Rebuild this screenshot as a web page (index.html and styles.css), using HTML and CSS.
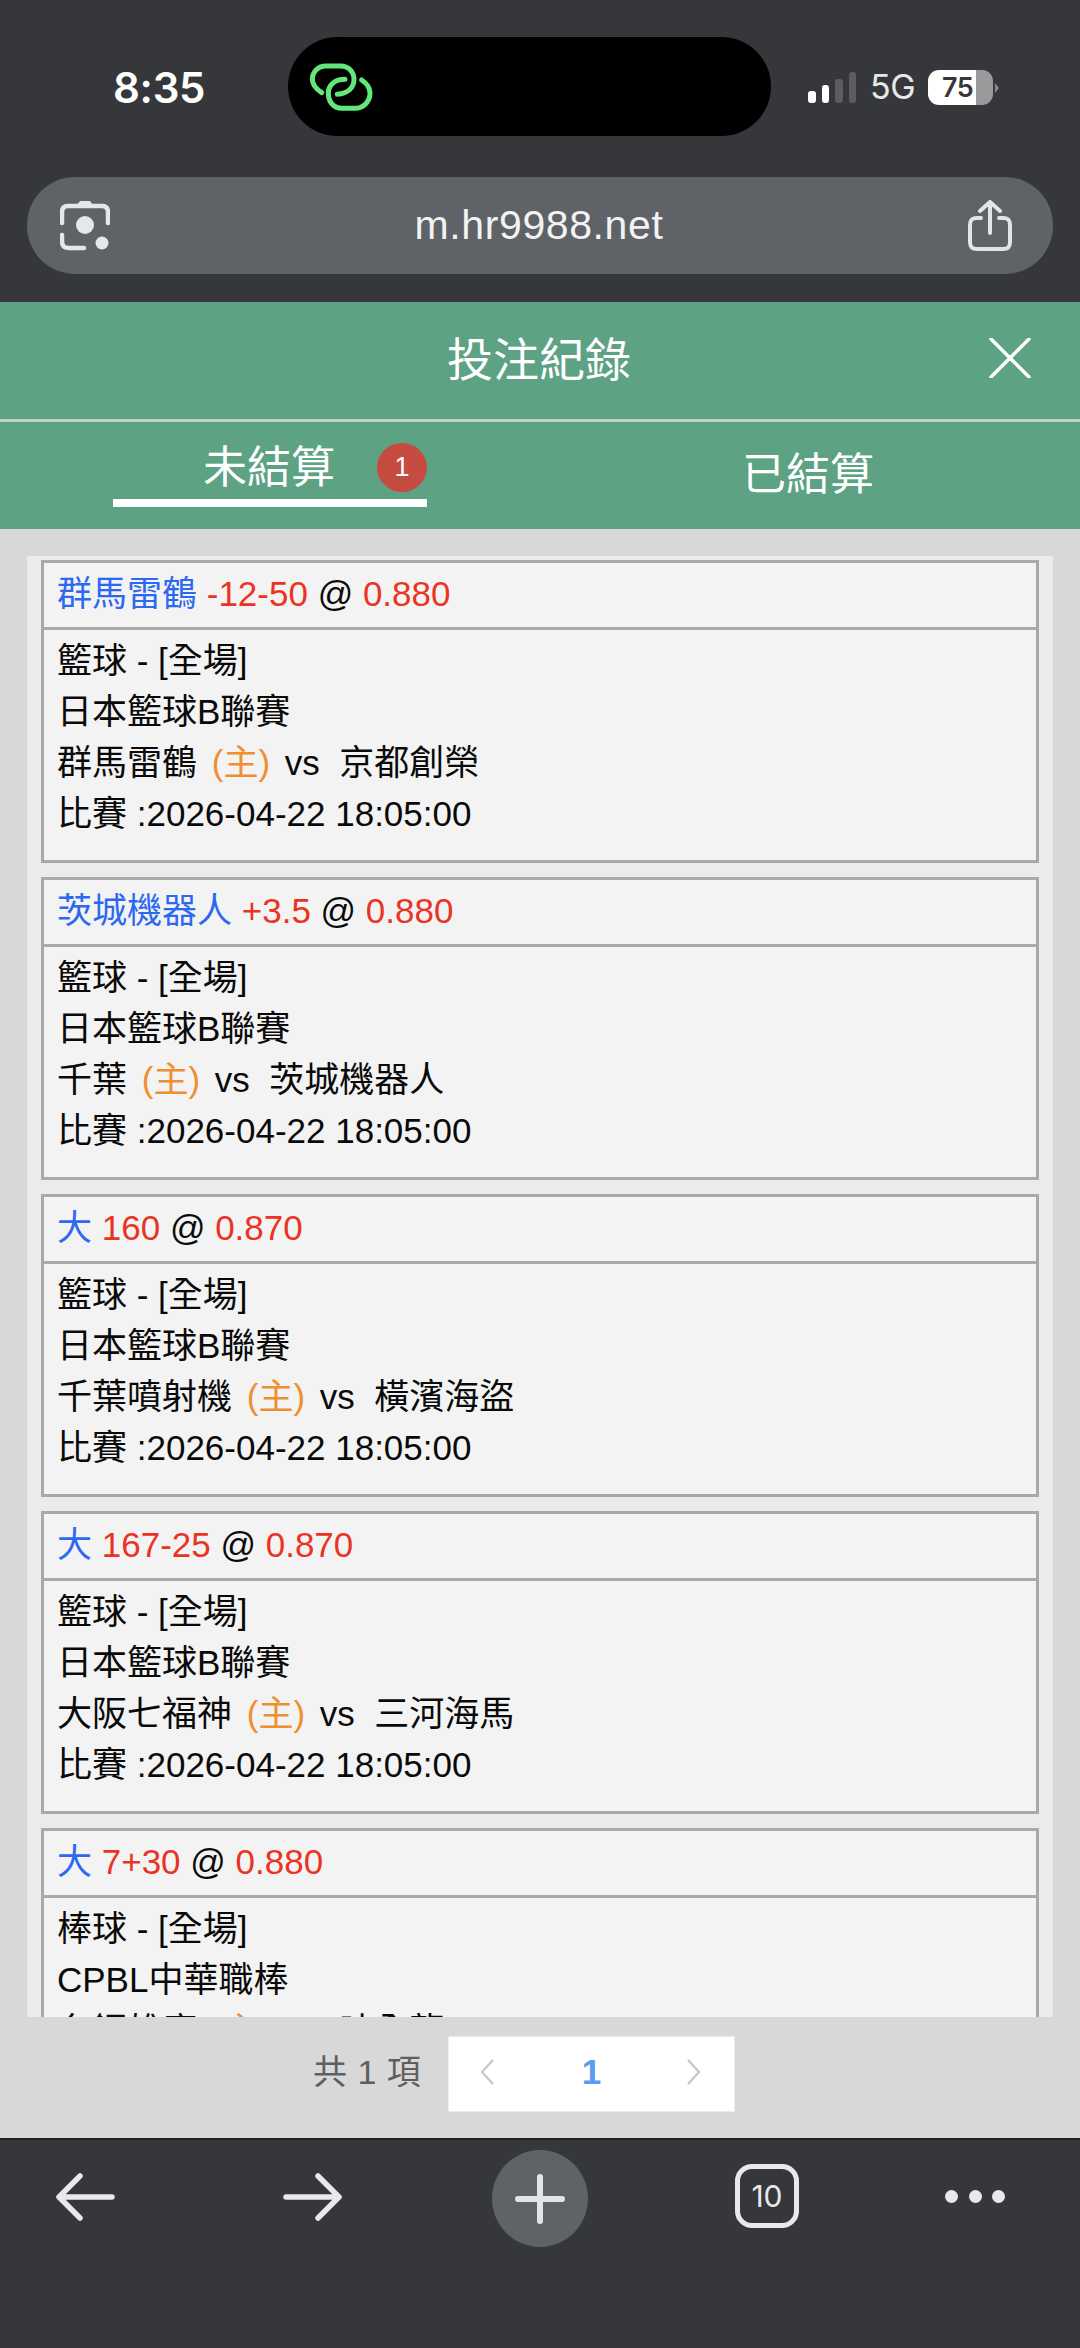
FILE: index.html
```html
<!DOCTYPE html>
<html lang="zh-Hant">
<head>
<meta charset="utf-8">
<title>投注紀錄</title>
<link rel="stylesheet" href="styles.css">
</head>
<body>
<div class="screen">
  <header class="chrome-top">
    <div class="status">
      <span class="time">8:35</span>
      <div class="island">
        <svg class="link-icon" width="80" height="70" viewBox="0 0 240 210" fill="none" stroke="#62e878" stroke-width="15" stroke-linecap="round">
          <path d="M65 128C45 115 37 100 37 88C37 65 55 48 78 48H122C145 48 162 65 162 88C162 112 145 130 112 133"/>
          <path d="M185 90C200 100 210 115 210 130C210 155 190 175 165 175H125C100 175 85 155 85 130C85 105 105 88 135 88"/>
        </svg>
      </div>
      <div class="signal">
        <i class="bar b1"></i><i class="bar b2"></i><i class="bar b3"></i><i class="bar b4"></i>
      </div>
      <span class="net">5G</span>
      <div class="battery"><span class="level">75</span></div>
      <i class="nub"></i>
    </div>
    <div class="urlbar">
      <svg width="50" height="50" viewBox="0 0 50 50" fill="none" stroke="#e6e7ea" stroke-width="4.5" stroke-linecap="round">
        <path d="M2 22V11C2 7 4 5 8 5H42C46 5 48 7 48 11V22"/>
        <path d="M17 4L20 0H30L33 4Z" fill="#e6e7ea" stroke="none"/>
        <path d="M2 34V40C2 45 4 47 9 47H24"/>
        <circle cx="25" cy="24" r="9" fill="#e6e7ea" stroke="none"/>
        <circle cx="42" cy="42" r="6.5" fill="#e6e7ea" stroke="none"/>
      </svg>
      <span class="url">m.hr9988.net</span>
      <svg width="44" height="52" viewBox="0 0 44 52" fill="none" stroke="#e3e4e7" stroke-width="4" stroke-linecap="round" stroke-linejoin="round">
        <path d="M13 18H9C4 18 2 20 2 25V42C2 47 4 49 9 49H35C40 49 42 47 42 42V25C42 20 40 18 35 18H31"/>
        <path d="M22 33V2M12 11L22 2L32 11"/>
      </svg>
    </div>
  </header>

  <section class="title-bar">
    <h1 class="title">投注紀錄</h1>
    <svg class="close" width="42" height="40" viewBox="0 0 42 40" stroke="#fff" stroke-width="3.5" stroke-linecap="round">
      <path d="M2 1L40 39M40 1L2 39"/>
    </svg>
  </section>

  <nav class="tabs">
    <div class="tab active">
      <span class="tab-label">未結算</span>
      <span class="badge">1</span>
    </div>
    <div class="tab other"><span class="tab-label">已結算</span></div>
  </nav>

  <main class="content">
    <div class="list">
      <article class="card">
        <div class="card-head"><span class="blue">群馬雷鶴</span> <span class="red">-12-50</span> @ <span class="red">0.880</span></div>
        <div class="card-body">
          <p>籃球 - [全場]</p>
          <p>日本籃球B聯賽</p>
          <p>群馬雷鶴 <span class="orange">(主)</span> vs&nbsp; 京都創榮</p>
          <p>比賽 :2026-04-22 18:05:00</p>
        </div>
      </article>
      <article class="card">
        <div class="card-head"><span class="blue">茨城機器人</span> <span class="red">+3.5</span> @ <span class="red">0.880</span></div>
        <div class="card-body">
          <p>籃球 - [全場]</p>
          <p>日本籃球B聯賽</p>
          <p>千葉 <span class="orange">(主)</span> vs&nbsp; 茨城機器人</p>
          <p>比賽 :2026-04-22 18:05:00</p>
        </div>
      </article>
      <article class="card">
        <div class="card-head"><span class="blue">大</span> <span class="red">160</span> @ <span class="red">0.870</span></div>
        <div class="card-body">
          <p>籃球 - [全場]</p>
          <p>日本籃球B聯賽</p>
          <p>千葉噴射機 <span class="orange">(主)</span> vs&nbsp; 橫濱海盜</p>
          <p>比賽 :2026-04-22 18:05:00</p>
        </div>
      </article>
      <article class="card">
        <div class="card-head"><span class="blue">大</span> <span class="red">167-25</span> @ <span class="red">0.870</span></div>
        <div class="card-body">
          <p>籃球 - [全場]</p>
          <p>日本籃球B聯賽</p>
          <p>大阪七福神 <span class="orange">(主)</span> vs&nbsp; 三河海馬</p>
          <p>比賽 :2026-04-22 18:05:00</p>
        </div>
      </article>
      <article class="card">
        <div class="card-head"><span class="blue">大</span> <span class="red">7+30</span> @ <span class="red">0.880</span></div>
        <div class="card-body">
          <p>棒球 - [全場]</p>
          <p>CPBL中華職棒</p>
          <p>台鋼雄鷹 <span class="orange">(主)</span> vs&nbsp; 味全龍</p>
          <p>比賽 :2026-04-22 18:05:00</p>
        </div>
      </article>
    </div>
  </main>

  <div class="pager">
    <span class="total">共 1 項</span>
    <div class="pages">
      <svg width="16" height="26" viewBox="0 0 16 26" fill="none" stroke="#c3c5cb" stroke-width="2.2"><path d="M14 1L3 13L14 25"/></svg>
      <span class="current">1</span>
      <svg width="16" height="26" viewBox="0 0 16 26" fill="none" stroke="#c3c5cb" stroke-width="2.2"><path d="M2 1L13 13L2 25"/></svg>
    </div>
  </div>

  <footer class="chrome-bottom">
    <svg class="nav-back" width="60" height="48" viewBox="0 0 60 48" fill="none" stroke="#e8e9ec" stroke-width="5.5" stroke-linecap="round" stroke-linejoin="round"><path d="M57 24H4M25 3L4 24L25 45"/></svg>
    <svg class="nav-forward" width="60" height="48" viewBox="0 0 60 48" fill="none" stroke="#e8e9ec" stroke-width="5.5" stroke-linecap="round" stroke-linejoin="round"><path d="M3 24H56M35 3L56 24L35 45"/></svg>
    <div class="plus">
      <svg width="50" height="50" viewBox="0 0 50 50" stroke="#e3e4e7" stroke-width="6" stroke-linecap="round"><path d="M25 3V47M3 25H47"/></svg>
    </div>
    <div class="tabs-count">10</div>
    <div class="dots"><i></i><i></i><i></i></div>
  </footer>
</div>
</body>
</html>
```
FILE: styles.css
```css
* { box-sizing: border-box; }
html, body { margin: 0; padding: 0; }
body { background: #d8d8d8; font-family: "Liberation Sans", "Noto Sans CJK TC", sans-serif; }
.screen { width: 1080px; height: 2348px; display: flex; flex-direction: column; overflow: hidden; }

.chrome-top { height: 302px; flex: none; background: #36373a; padding-top: 37px; }
.status { height: 99px; display: flex; align-items: center; padding-left: 114px; color: #fff; }
.time { width: 174px; font-size: 42px; font-weight: 600; font-family: "Inter", "Liberation Sans", sans-serif; letter-spacing: -0.3px; margin-top: 2px; margin-left: -1px; margin-right: 1px; }
.island { width: 483px; height: 99px; background: #000; border-radius: 50px; display: flex; align-items: center; padding-left: 12px; }
.link-icon { margin-top: -3px; }
.signal { margin-left: 37px; display: flex; align-items: flex-end; gap: 6px; height: 31px; margin-top: 1px; }
.bar { width: 7.5px; border-radius: 3px; display: block; }
.b1 { height: 12px; background: #fff; }
.b2 { height: 18px; background: #fff; }
.b3 { height: 24px; background: #5c5d60; }
.b4 { height: 31px; background: #5c5d60; }
.net { margin-left: 14px; width: 45px; font-size: 34px; color: #e8e8e8; font-family: "Inter", "Liberation Sans", sans-serif; letter-spacing: -0.5px; }
.battery { margin-left: 13px; width: 65px; height: 35px; margin-top: 2px; border-radius: 11px; background: linear-gradient(90deg, #fff 0 48px, #9a9a9c 48px); color: #36373a; font-size: 27px; font-weight: 600; display: flex; align-items: center; padding-left: 14px; font-family: "Inter", "Liberation Sans", sans-serif; }
.level { letter-spacing: -0.5px; }
.nub { width: 0; height: 0; margin-left: 2px; margin-top: 2px; border-left: 4px solid #8a8a8c; border-top: 5px solid transparent; border-bottom: 5px solid transparent; }

.urlbar { margin: 41px 27px 0; height: 97px; background: #5f6266; border-radius: 48px; display: flex; align-items: center; justify-content: space-between; padding: 0 41px 0 33px; }
.url { font-size: 41px; color: #f2f2f4; letter-spacing: 0.6px; }

.title-bar { height: 120px; flex: none; background: #5ca283; display: flex; align-items: center; justify-content: center; position: relative; border-bottom: 3px solid #c6cfca; padding: 0 2px 9px 0; }
.title { margin: 0; font-size: 46px; font-weight: 400; color: #fff; }
.close { position: absolute; right: 49px; top: 36px; }

.tabs { height: 107px; flex: none; background: #5ca283; display: flex; padding-left: 113px; color: #fff; font-size: 44px; }
.tab { position: relative; display: flex; }
.tab.active { width: 314px; height: 85px; border-bottom: 8px solid #fff; padding: 15px 0 0 90px; gap: 42px; }
.tab.other { margin-left: 315px; padding-top: 22px; }
.tab-label { line-height: 62px; letter-spacing: 0; }
.badge { width: 50px; height: 49px; margin-top: 6px; border-radius: 50%; background: #c64b40; font-size: 27px; display: flex; align-items: center; justify-content: center; }

.content { flex: none; height: 1488px; background: #d8d8d8; padding: 27px 27px 0; }
.list { height: 100%; background: #ebebeb; overflow: hidden; padding: 4px 14px 0; display: flex; flex-direction: column; gap: 14px; }
.card { flex: none; height: 303px; background: #f3f3f3; border: 3px solid #a9a9a9; font-size: 35px; color: #0a0a0a; }
.card-head { height: 67px; line-height: 62px; padding-left: 13px; border-bottom: 3px solid #a9a9a9; white-space: nowrap; }
.card-body { padding: 5px 0 0 13px; }
.card-body p { margin: 0; height: 51px; line-height: 51px; white-space: nowrap; }
.blue { color: #2d68f0; }
.red { color: #ea3323; }
.orange { color: #ee8f32; margin: 0 5px; }

.pager { flex: none; height: 121px; background: #d8d8d8; display: flex; padding: 19px 0 0 313px; }
.total { width: 135px; height: 76px; line-height: 72px; font-size: 34px; color: #5f5f5f; letter-spacing: 0.5px; }
.pages { width: 287px; height: 76px; background: #fff; border: 1px solid #ececec; display: flex; align-items: center; justify-content: space-between; padding: 0 32px 4px 30px; }
.current { font-size: 35px; font-weight: 700; color: #5a9cf0; margin-left: 2px; }

.chrome-bottom { flex: 1; background: #36373a; border-top: 2px solid #222; display: flex; align-items: flex-start; padding: 33px 0 0 55px; }
.nav-forward { margin-left: 168px; }
.plus { width: 96px; height: 97px; margin-left: 149px; margin-top: -23px; border-radius: 50%; background: #5f6266; display: flex; align-items: center; justify-content: center; }
.tabs-count { width: 64px; height: 64px; margin-left: 147px; margin-top: -9px; border: 5px solid #e8e9ec; border-radius: 17px; color: #e8e9ec; font-size: 30px; display: flex; align-items: center; justify-content: center; font-family: "Inter", "Liberation Sans", sans-serif; }
.dots { display: flex; gap: 10.5px; margin-left: 146px; margin-top: 17px; }
.dots i { width: 13px; height: 13px; border-radius: 50%; background: #e8e9ec; display: block; }
```
